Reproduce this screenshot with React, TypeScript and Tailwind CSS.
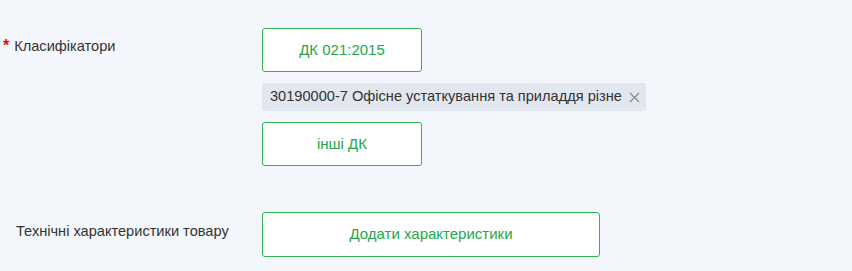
export default function App() {
  return (
    <div className="w-[852px] h-[271px] bg-[#f3f6fa] font-['Liberation_Sans',Arial,sans-serif] text-[14.6px] text-[#333]">
      {/* Класифікатори */}
      <div className="flex pt-[28px]">
        <div className="w-[262px] shrink-0 pl-[3px] pt-[10px] flex items-start">
          <span className="text-[#ff0000] text-[16px] leading-[16px] font-bold mr-[5px]">*</span>
          <span className="leading-[16px]">Класифікатори</span>
        </div>
        <div className="flex flex-col items-start">
          <button className="w-[160px] h-[44px] bg-white border border-[#2db351] rounded-[3px] text-[#22a84a] text-[15px]">
            ДК 021:2015
          </button>
          <div className="mt-[11px] h-[28px] flex items-center gap-[7px] bg-[#e2e6ee] rounded-[3px] pl-[8px] pr-[6px] text-[#333]">
            <span>30190000-7 Офісне устаткування та приладдя різне</span>
            <svg width="11" height="11" viewBox="0 0 11 11" className="text-[#8a8f99]">
              <path d="M1 1L10 10M10 1L1 10" stroke="currentColor" strokeWidth="1.4" fill="none" />
            </svg>
          </div>
          <button className="mt-[11px] w-[160px] h-[44px] bg-white border border-[#2db351] rounded-[3px] text-[#22a84a] text-[15px]">
            інші ДК
          </button>
        </div>
      </div>

      {/* Технічні характеристики */}
      <div className="flex items-center mt-[46px]">
        <div className="w-[262px] shrink-0 pl-[16px] pb-[5px]">Технічні характеристики товару</div>
        <button className="w-[338px] h-[45px] bg-white border border-[#2db351] rounded-[3px] text-[#22a84a] text-[15px]">
          Додати характеристики
        </button>
      </div>
    </div>
  )
}
